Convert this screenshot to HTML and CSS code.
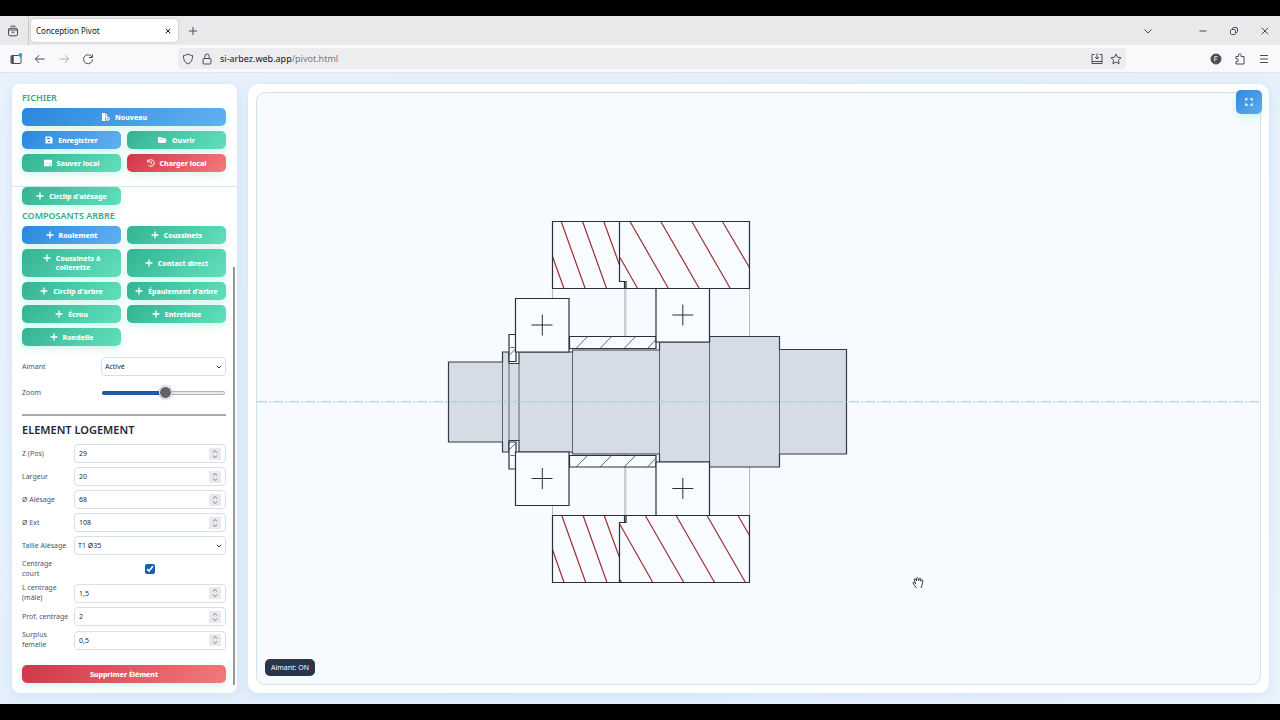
FILE: index.html
```html
<!DOCTYPE html>
<html lang="fr">
<head>
    <meta charset="UTF-8">
    <meta name="viewport" content="width=device-width, initial-scale=1.0">
    <title>Conception Pivot</title>
    <link rel="stylesheet" href="styles.css">
</head>
<body>

    <!-- Icons used more than once -->
    <svg class="defs" width="0" height="0">
        <symbol id="plus" viewBox="0 0 8 8"><path d="M4 1v6M1 4h6" fill="none" stroke="currentColor" stroke-width="1.3" stroke-linecap="round"/></symbol>
        <symbol id="arrows" viewBox="0 0 12 12"><rect width="12" height="12" rx="1" fill="#e9e9ed"/><path d="M3.800 4.500L6 2.500l2.200 2M3.800 7.500L6 9.500l2.200-2" fill="none" stroke="#85858f"/></symbol>
    </svg>

    <div class="tab-bar">
        <button type="button" class="icon-btn view-btn" aria-label="Firefox View">
            <svg width="12" height="12" viewBox="0 0 12 12"><path d="M3.500 1.200h5M1.500 5q0-1.700 1.500-1.700h6q1.500 0 1.500 1.700v4.300q0 1.500-1.500 1.500H3q-1.500 0-1.500-1.500zM1.500 5h9M4.500 7.200h3"/></svg>
        </button>
        <div class="tab">
            <span>Conception Pivot</span>
            <button type="button" class="icon-btn close-tab" aria-label="Fermer l'onglet">
                <svg width="8" height="8" viewBox="0 0 8 8"><path d="M1.700 1.700l4.600 4.600M6.300 1.700l-4.600 4.600"/></svg>
            </button>
        </div>
        <button type="button" class="icon-btn new-tab" aria-label="Nouvel onglet">
            <svg width="10" height="10" viewBox="0 0 10 10"><path d="M5 1v8M1 5h8"/></svg>
        </button>
        <div class="window-buttons">
            <button type="button" class="icon-btn tabs-list" aria-label="Lister les onglets"><svg width="10" height="10" viewBox="0 0 10 10"><path d="M1.500 3.500L5 7l3.500-3.500"/></svg></button>
            <button type="button" class="icon-btn" aria-label="Réduire"><svg width="10" height="10" viewBox="0 0 10 10"><path d="M1.500 5h7"/></svg></button>
            <button type="button" class="icon-btn" aria-label="Restaurer"><svg width="10" height="10" viewBox="0 0 10 10"><rect x="1.500" y="3.500" width="5" height="5" rx="1"/><path d="M3.500 3V2.500a1 1 0 0 1 1-1h2.500a1.500 1.500 0 0 1 1.500 1.500v2.500a1 1 0 0 1-1 1h-.500"/></svg></button>
            <button type="button" class="icon-btn" aria-label="Fermer"><svg width="10" height="10" viewBox="0 0 10 10"><path d="M1.700 1.700l6.600 6.600M8.300 1.700l-6.600 6.600"/></svg></button>
        </div>
    </div>

    <div class="nav-bar">
        <div class="nav-buttons">
            <button type="button" class="icon-btn" aria-label="Panneau latéral"><svg width="12" height="12" viewBox="0 0 12 12"><rect x="1" y="2.500" width="10" height="8" rx="1"/><path d="M2.500 3v7" stroke-width="2.500"/><circle class="dot" cx="10.500" cy="2" r="2"/></svg></button>
            <button type="button" class="icon-btn" aria-label="Reculer"><svg width="12" height="12" viewBox="0 0 12 12"><path d="M10.500 6h-9M5 2.200L1.500 6 5 9.800"/></svg></button>
            <button type="button" class="icon-btn disabled" aria-label="Avancer" disabled><svg width="12" height="12" viewBox="0 0 12 12"><path d="M1.500 6h9M7 2.200L10.500 6 7 9.800"/></svg></button>
            <button type="button" class="icon-btn" aria-label="Actualiser"><svg width="12" height="12" viewBox="0 0 12 12"><path d="M10 4.200A4.500 4.500 0 1 0 10.500 6.500M10.300 1.200v3.300H7"/></svg></button>
        </div>
        <div class="url-bar">
            <svg width="12" height="12" viewBox="0 0 12 12"><path d="M6 1c1.400 1 2.800 1.400 4.500 1.500C10.800 6.800 9 9.700 6 11 3 9.700 1.200 6.800 1.500 2.500 3.200 2.400 4.600 2 6 1z"/></svg>
            <svg width="12" height="12" viewBox="0 0 12 12"><rect x="2" y="5.500" width="8" height="5.500" rx="1"/><path d="M3.800 5.500V3.200a2.200 2.200 0 0 1 4.400 0v2.300"/></svg>
            <span class="url">si-arbez.web.app<span>/pivot.html</span></span>
            <svg width="12" height="12" viewBox="0 0 12 12"><path d="M3.500 1.500H1v9h10v-9H8.500M1 8.500h10M6 .500v5M4 4l2 2 2-2"/></svg>
            <svg width="12" height="12" viewBox="0 0 12 12"><path d="M6 1l1.500 3.200 3.500.500-2.500 2.500.600 3.500L6 9l-3.100 1.700.600-3.500L1 4.700l3.500-.500z"/></svg>
        </div>
        <div class="nav-tools">
            <button type="button" class="icon-btn" aria-label="Compte"><svg width="12" height="12" viewBox="0 0 12 12"><circle cx="6" cy="6" r="5" fill="#4b4b52"/><path d="M4.700 8.500v-5h3M4.700 6h2.500" stroke="#dddde0"/></svg></button>
            <button type="button" class="icon-btn" aria-label="Extensions"><svg width="12" height="12" viewBox="0 0 12 12"><path d="M2 3.500h2.500V2.200a1.300 1.300 0 0 1 2.600 0v1.300H10v7.500H2V8.500h1a1.300 1.300 0 0 0 0-2.600H2z"/></svg></button>
            <button type="button" class="icon-btn" aria-label="Menu"><svg width="12" height="12" viewBox="0 0 12 12"><path d="M2 2.500h8M2 6h8M2 9.500h8"/></svg></button>
        </div>
    </div>

    <main class="page">
        <aside class="sidebar">
            <section class="file-section">
                <h4>Fichier</h4>
                <div class="btn-grid">
                    <button type="button" class="btn blue wide"><svg width="9" height="8" viewBox="0 0 10 9"><path d="M1 0h3.500v2.500H7v1.300A3 3 0 0 0 5.300 9H1zM5.200 0L7 2H5.200z" fill="currentColor"/><circle cx="7.500" cy="6.500" r="2.300" fill="currentColor"/><path d="M7.500 5.300v2.400M6.300 6.500h2.400" stroke="#4598e5" stroke-width=".700"/></svg>Nouveau</button>
                    <button type="button" class="btn blue"><svg width="8" height="8" viewBox="0 0 8 8"><path d="M1.500.500h4.300l1.700 1.700v5.300h-7v-7z" fill="currentColor"/><path d="M2 1.800h3.200v1.500H2z" fill="#3b91e2"/><circle cx="4" cy="5.600" r="1" fill="#3b91e2"/></svg>Enregistrer</button>
                    <button type="button" class="btn"><svg width="9" height="8" viewBox="0 0 9 8"><path d="M0 1h3l1 1h3.500v1.300H2.300L.500 6.500H0zM2 3.500H9L7.300 7H.500z" fill="currentColor"/></svg>Ouvrir</button>
                    <button type="button" class="btn"><svg width="8" height="8" viewBox="0 0 8 8"><path d="M0 1.500Q0 .800.800.800h6.400q.800 0 .800.700V4.700H0zM0 5h8v1.500q0 .700-.800.700H.800Q0 7.200 0 6.500z" fill="currentColor"/><path d="M5 6.100h2" stroke="#48c9a7" stroke-width=".700"/></svg>Sauver local</button>
                    <button type="button" class="btn red"><svg width="8" height="8" viewBox="0 0 8 8"><path d="M1.200 2.200A3.300 3.300 0 1 1 1.500 6.200M.700.600v2.200h2.200M4.200 2.200v2l1.400 1" fill="none" stroke="currentColor"/></svg>Charger local</button>
                </div>
            </section>

            <section class="tools-section">
                <div class="btn-grid">
                    <button type="button" class="btn"><svg width="8" height="8"><use href="#plus"/></svg>Circlip d'alésage</button>
                </div>
                <h4>Composants arbre</h4>
                <div class="btn-grid">
                    <button type="button" class="btn blue"><svg width="8" height="8"><use href="#plus"/></svg>Roulement</button>
                    <button type="button" class="btn"><svg width="8" height="8"><use href="#plus"/></svg>Coussinets</button>
                    <button type="button" class="btn two-lines"><svg width="8" height="8"><use href="#plus"/></svg><span>Coussinets à<br>collerette</span></button>
                    <button type="button" class="btn"><svg width="8" height="8"><use href="#plus"/></svg>Contact direct</button>
                    <button type="button" class="btn"><svg width="8" height="8"><use href="#plus"/></svg>Circlip d'arbre</button>
                    <button type="button" class="btn"><svg width="8" height="8"><use href="#plus"/></svg>Épaulement d'arbre</button>
                    <button type="button" class="btn"><svg width="8" height="8"><use href="#plus"/></svg>Écrou</button>
                    <button type="button" class="btn"><svg width="8" height="8"><use href="#plus"/></svg>Entretoise</button>
                    <button type="button" class="btn"><svg width="8" height="8"><use href="#plus"/></svg>Rondelle</button>
                </div>

                <div class="settings">
                    <label for="aimant">Aimant</label>
                    <div class="select-box">
                        <select id="aimant"><option>Activé</option><option>Désactivé</option></select>
                        <svg width="8" height="8" viewBox="0 0 8 8"><path d="M1.800 2.800L4 5l2.200-2.200"/></svg>
                    </div>
                    <label for="zoom">Zoom</label>
                    <input type="range" id="zoom" min="0" max="100" value="52">
                </div>

                <hr>

                <h3>ELEMENT LOGEMENT</h3>
                <div class="props">
                    <label for="z">Z (Pos)</label>
                    <div class="number-box"><input type="text" inputmode="decimal" id="z" value="29"><svg width="12" height="12"><use href="#arrows"/></svg></div>
                    <label for="largeur">Largeur</label>
                    <div class="number-box"><input type="text" inputmode="decimal" id="largeur" value="20"><svg width="12" height="12"><use href="#arrows"/></svg></div>
                    <label for="alesage">Ø Alésage</label>
                    <div class="number-box"><input type="text" inputmode="decimal" id="alesage" value="68"><svg width="12" height="12"><use href="#arrows"/></svg></div>
                    <label for="ext">Ø Ext</label>
                    <div class="number-box"><input type="text" inputmode="decimal" id="ext" value="108"><svg width="12" height="12"><use href="#arrows"/></svg></div>
                    <label for="taille">Taille Alésage</label>
                    <div class="select-box">
                        <select id="taille"><option>T1 Ø35</option></select>
                        <svg width="8" height="8" viewBox="0 0 8 8"><path d="M1.800 2.800L4 5l2.200-2.200"/></svg>
                    </div>
                    <label for="centrage">Centrage<br>court</label>
                    <input type="checkbox" id="centrage" checked>
                    <label for="lcentrage">L centrage<br>(mâle)</label>
                    <div class="number-box"><input type="text" inputmode="decimal" id="lcentrage" value="1,5"><svg width="12" height="12"><use href="#arrows"/></svg></div>
                    <label for="prof">Prof. centrage</label>
                    <div class="number-box"><input type="text" inputmode="decimal" id="prof" value="2"><svg width="12" height="12"><use href="#arrows"/></svg></div>
                    <label for="surplus">Surplus<br>femelle</label>
                    <div class="number-box"><input type="text" inputmode="decimal" id="surplus" value="0,5"><svg width="12" height="12"><use href="#arrows"/></svg></div>
                </div>
                <button type="button" class="btn red delete">Supprimer Élément</button>
                <div class="scroll-thumb"></div>
            </section>
        </aside>

        <section class="viewer">
            <div class="canvas">
                <svg class="drawing" viewBox="257 93 1003 591">
                    <!-- Logement -->
                    <path class="thin" d="M552.500 288v228M749.500 288v228"/>
                    <path class="double" d="M625.200 288v228"/>
                    <path class="paper" d="M552.500 221.500h197v67h-197zM552.500 515.500h197v67h-197z"/>
                    <path class="hatch" d="M552.500 256.500l11.300 31.500M561.200 221.500l23.800 66.500M582.600 221.500l23.800 66.500M603.800 221.500l15.500 43M620 257.500l17.300 30.500M630 221.500l38.200 66.500M660.800 221.500l38.200 66.500M691.800 221.500l38.200 66.500M722.400 221.500l27 46"/>
                    <path class="hatch" d="M552.500 549.500l11.500 33M561.800 515.500l23.900 67M583.100 515.500l23.900 67M604.200 515.500l15.100 41.500M620 524.500l32.800 58M645.300 515.500l38.500 67M676.100 515.500l38.500 67M707 515.500l38.500 67M738 515.500l11.500 20M619.500 579l2.200 3.500"/>
                    <path class="line" d="M552.500 221.500h197v67h-197zM552.500 515.500h197v67h-197z"/>
                    <path class="line" d="M619.500 221.500v60h6.500v7M624.500 282v6M619.500 582.500v-60h6.500v-7M624.500 522v-6"/>

                    <!-- Arbre -->
                    <path class="shaft" d="M448.500 362h54v-10h6.500v11.500h10v-11.500h53.500v-2h87v-8h50v-5.500h70v13h67v104.500h-67v13h-70v-5h-50v-8h-87v-2h-53.500v-11.500h-10v11.500h-6.500v-10h-54z"/>
                    <path class="edge" d="M502.500 362v80M509 363v78M519 363v78M572.500 350v104M659.500 350v104M709.500 342v120M779.500 349v105"/>
                    <path class="axis" d="M257 401.800H1260"/>

                    <!-- Entretoise -->
                    <path class="paper line" d="M569.500 336.500h86.500v12h-86.500zM569.500 455.500h86.500v11.500h-86.500z"/>
                    <path class="edge" d="M576 348.500l11.700-12M600 348.500l11.700-12M624 348.500l11.700-12M647.500 348.500l8.500-9M576 467l11.700-11.500M600 467l11.700-11.500M624 467l11.700-11.500M647.500 467l8.500-9"/>

                    <!-- Circlip -->
                    <path class="paper line" d="M509 334.500h7v27h-7zM509 442h7v27h-7z"/>
                    <path class="edge" d="M509 355.500l7-7M510.500 347.500h4M509 450l7-7M510.500 455.500h4"/>

                    <!-- Roulements -->
                    <path class="paper line" d="M515.500 298.500h53.500v53.500h-53.500zM515.500 452h53.500v53.500h-53.500zM656 288.500h53.500v53.500h-53.500zM656 462h53.500v53.500h-53.500z"/>
                    <path class="line cross" d="M531.500 325h21M542.300 314.500v21M531.500 478.500h21M542.300 468v21M672.300 315h21M682.800 304.500v21M672.300 488.500h21M682.800 478v21"/>

                    <!-- Curseur -->
                    <path class="hand" d="M916.500 588l-3.200-4.200c-1-1.400.400-2 1.300-1l1 1-1.400-4c-.200-1.300 1.300-1.400 1.600-.300l.800 1.500-.200-2.600c.300-1 1.600-1 1.800 0l.500 2.300.600-2c.500-.800 1.700-.500 1.500.500l-.100 2 .700-1c.800-.700 1.700 0 1.400 1-.400 2.600-.900 4.500-1.800 6.800"/>
                </svg>
                <div class="badge">Aimant: ON</div>
                <button type="button" class="fullscreen" aria-label="Plein écran">
                    <svg width="8" height="8" viewBox="0 0 8 8"><path d="M.800 2.800v-2h2M5.200.800h2v2M7.200 5.200v2h-2M2.800 7.200h-2v-2" fill="none" stroke="currentColor" stroke-width="1.200"/></svg>
                </button>
            </div>
        </section>
    </main>

</body>
</html>
```

FILE: styles.css
```css
* {
    box-sizing: border-box;
}
body {
    margin: 0;
    padding: 16px 0;
    height: 100vh;
    display: flex;
    flex-direction: column;
    background-color: #000;
    color: #222b38;
    font-family: "Noto Sans", "Open Sans", sans-serif;
    font-size: 7px;
}
button, input, select {
    font-family: inherit;
    font-size: inherit;
    color: inherit;
}
.defs {
    position: absolute;
}

/* Browser bars */
.tab-bar,
.nav-bar {
    display: flex;
    align-items: center;
    flex-shrink: 0;
}
.tab-bar {
    height: 29px;
    background-color: #e9e9eb;
}
.nav-bar {
    height: 28px;
    background-color: #f9f9fb;
    border-bottom: 1px solid #dfe3ea;
}
.icon-btn {
    display: flex;
    padding: 0;
    border: none;
    background: none;
}
.icon-btn svg,
.url-bar svg {
    fill: none;
    stroke: #4b4b52;
    stroke-width: 1;
    stroke-linejoin: round;
    flex-shrink: 0;
}
.icon-btn .dot {
    fill: #21a9d3;
    stroke: none;
}
.close-tab svg {
    stroke: #15141a;
}
.disabled {
    opacity: 0.4;
}
.view-btn {
    width: 29px;
    height: 29px;
    padding-left: 7px;
    align-items: center;
    border-right: 1px solid #c9c9cd;
}
.tab {
    display: flex;
    align-items: center;
    justify-content: space-between;
    width: 147px;
    height: 23px;
    margin: 0 10px 0 2px;
    padding: 0 6px 0 5px;
    background-color: #fff;
    border-radius: 4px;
    box-shadow: 0 0 2px rgba(0,0,0,0.3);
    font-size: 8px;
    color: #15141a;
}
.window-buttons {
    display: flex;
    gap: 21px;
    margin-left: auto;
    padding-right: 10px;
}
.tabs-list {
    margin-right: 24px;
}
.nav-buttons {
    display: flex;
    gap: 12px;
    width: 178px;
    padding-left: 10px;
}
.url-bar {
    flex: 1;
    display: flex;
    align-items: center;
    gap: 7px;
    height: 21px;
    padding: 0 4px;
    background-color: #ededf0;
    border-radius: 4px;
}
.url {
    flex: 1;
    font-size: 9px;
    color: #15141a;
}
.url span {
    color: #77777e;
}
.nav-tools {
    display: flex;
    gap: 12px;
    padding: 0 10px 0 84px;
}

/* Page */
.page {
    flex: 1;
    min-height: 0;
    display: flex;
    gap: 11px;
    padding: 11px 11px 11px 12px;
    background: linear-gradient(135deg, #e8f2fc, #e3effb 50%, #eaf4fd);
}
.sidebar {
    width: 225px;
    flex-shrink: 0;
    display: flex;
    flex-direction: column;
    background-color: #fff;
    border-radius: 8px;
    box-shadow: 0 3px 12px rgba(70,130,200,0.12);
    overflow: hidden;
}
h4 {
    margin: 0;
    font-size: 9px;
    line-height: 12px;
    font-weight: 600;
    text-transform: uppercase;
    color: #36a78a;
}
.file-section {
    padding: 8px 11px 14px 10px;
    border-bottom: 1px solid #d5eaf0;
}
.file-section h4 {
    margin-bottom: 4px;
}
.tools-section {
    position: relative;
    flex: 1;
    padding: 0 11px 9px 10px;
}
.tools-section h4 {
    margin: 5px 0 4px;
}
.btn-grid {
    display: grid;
    grid-template-columns: 1fr 1fr;
    gap: 5px 6px;
}
.btn {
    display: flex;
    align-items: center;
    justify-content: center;
    gap: 5px;
    min-height: 18px;
    padding: 0 4px;
    border: none;
    border-radius: 5px;
    background: linear-gradient(135deg, #34b394, #62e0bd);
    box-shadow: 0 3px 8px rgba(80,220,185,0.25);
    color: #fff;
    font-size: 7px;
    line-height: 9px;
    font-weight: 800;
    text-align: left;
    white-space: nowrap;
    cursor: pointer;
}
.btn svg {
    flex-shrink: 0;
}
.btn.blue {
    background: linear-gradient(135deg, #2b87dc, #63b0f1);
}
.btn.red {
    background: linear-gradient(135deg, #cf3748, #f27a7c);
}
.btn.wide {
    grid-column: span 2;
}
.btn.two-lines {
    min-height: 28px;
}
.btn.two-lines svg {
    align-self: flex-start;
    margin-top: 5px;
}
label {
    color: #4a5568;
    line-height: 10px;
}
.settings {
    display: grid;
    grid-template-columns: 73px 1fr;
    gap: 7px 6px;
    align-items: center;
    margin-top: 11px;
}
.select-box,
.number-box {
    display: flex;
    align-items: center;
    height: 19px;
    border: 1px solid #d7dfe5;
    border-radius: 4px;
    background-color: #fff;
}
.select-box {
    position: relative;
}
.select-box select {
    width: 100%;
    height: 17px;
    padding: 0 3px;
    appearance: none;
    border: none;
    background: none;
}
.select-box svg {
    position: absolute;
    right: 2px;
    fill: none;
    stroke: #333;
    pointer-events: none;
}
.number-box {
    padding-right: 4px;
}
.number-box input {
    flex: 1;
    min-width: 0;
    padding: 0 4px;
    border: none;
    background: none;
}
#zoom {
    appearance: none;
    width: 100%;
    height: 20px;
    margin: 0;
    padding: 0 1px;
    background: none;
}
#zoom::-webkit-slider-runnable-track {
    height: 4px;
    border-radius: 2px;
    background: linear-gradient(to right, #175fb5 52%, #e9e9ed 52%);
    box-shadow: inset 0 0 0 1px rgba(60,60,90,0.3);
}
#zoom::-webkit-slider-thumb {
    appearance: none;
    width: 13px;
    height: 13px;
    margin-top: -5px;
    border: 1px solid #fff;
    border-radius: 50%;
    background-color: #62626c;
    box-shadow: 0 0 2px rgba(0,0,0,0.5);
}
hr {
    height: 2px;
    margin: 11px 0 7px;
    border: none;
    background-color: #a9a9a9;
}
h3 {
    margin: 0 0 7px;
    font-size: 11px;
    line-height: 14px;
    font-weight: 600;
    color: #1e293b;
}
.props {
    display: grid;
    grid-template-columns: 52px 1fr;
    gap: 4px 0;
    align-items: center;
}
#centrage {
    width: 10px;
    height: 10px;
    margin: 0;
    justify-self: center;
    accent-color: #175fb5;
}
.delete {
    width: 100%;
    margin-top: 15px;
}
.scroll-thumb {
    position: absolute;
    right: 2px;
    top: 80px;
    bottom: 8px;
    width: 2px;
    background-color: #999;
}

/* Drawing */
.viewer {
    flex: 1;
    min-width: 0;
    display: flex;
    padding: 8px;
    background-color: #fff;
    border-radius: 10px;
    box-shadow: 0 3px 12px rgba(70,130,200,0.12);
}
.canvas {
    position: relative;
    flex: 1;
    display: flex;
    min-width: 0;
    border: 1px solid #cfe3ea;
    border-radius: 9px;
    background-color: #f7fbff;
}
.drawing {
    width: 100%;
    height: 100%;
}
.drawing path {
    fill: none;
}
.drawing .paper {
    fill: #f8fbff;
}
.drawing .line {
    stroke: #2a3038;
    stroke-width: 1.2;
}
.drawing .cross {
    stroke-width: 1;
}
.drawing .shaft {
    fill: #d5dce6;
    stroke: #333b45;
    stroke-width: 1.2;
}
.drawing .edge {
    stroke: #4b5563;
    stroke-width: 0.9;
}
.drawing .thin {
    stroke: #a3a9af;
    stroke-width: 0.8;
}
.drawing .double {
    stroke: #cbcfd3;
    stroke-width: 2.5;
}
.drawing .hatch {
    stroke: #9c3036;
    stroke-width: 1.2;
}
.drawing .axis {
    stroke: #a3c8dc;
    stroke-width: 1;
    stroke-dasharray: 10 2 2 2;
}
.drawing .hand {
    fill: #fff;
    stroke: #222;
    stroke-width: 0.9;
}
.badge {
    position: absolute;
    left: 8px;
    bottom: 8px;
    padding: 4px 6px;
    border-radius: 5px;
    background-color: #27344a;
    color: #fff;
    font-size: 7px;
    line-height: 9px;
}
.fullscreen {
    position: absolute;
    top: -3px;
    right: -2px;
    width: 26px;
    height: 24px;
    display: flex;
    align-items: center;
    justify-content: center;
    border: none;
    border-radius: 5px;
    background: linear-gradient(135deg, #3589da, #5cacef);
    box-shadow: 0 3px 8px rgba(80,220,185,0.25);
    color: #fff;
}
```
